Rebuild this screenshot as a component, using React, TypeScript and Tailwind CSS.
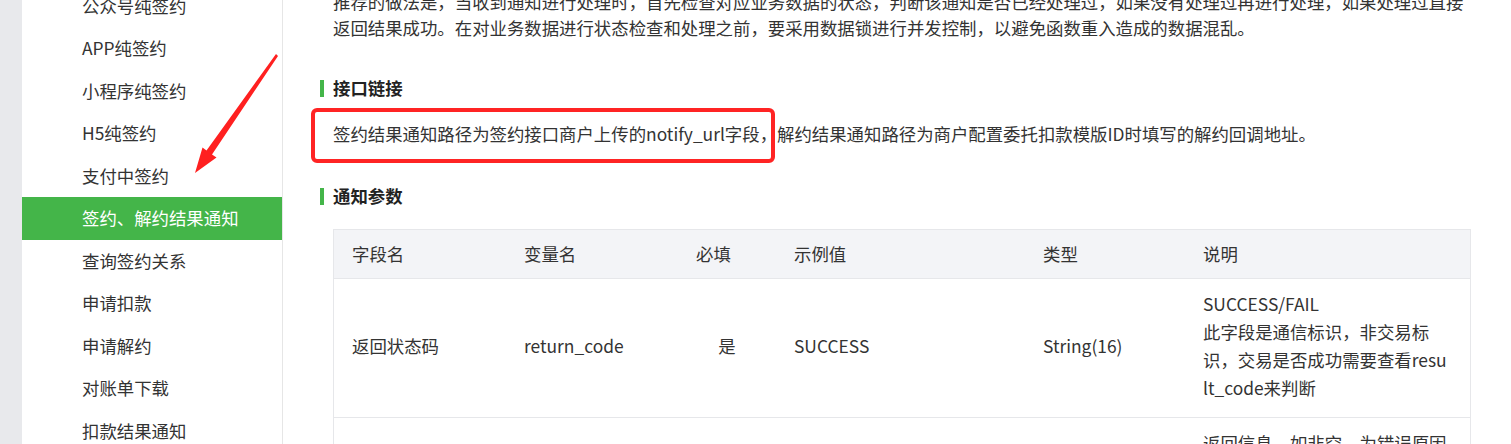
import React from "react";

const font = { fontFamily: '"Noto Sans CJK SC", "Noto Sans", sans-serif' };

const navItems = [
  "公众号纯签约",
  "APP纯签约",
  "小程序纯签约",
  "H5纯签约",
  "支付中签约",
  "签约、解约结果通知",
  "查询签约关系",
  "申请扣款",
  "申请解约",
  "对账单下载",
  "扣款结果通知",
];

function Heading({ children }: { children: React.ReactNode }) {
  return (
    <div className="flex items-center gap-[9px]">
      <span className="w-[4px] h-[17px] bg-[#44b549]" />
      <span className="font-bold text-[17.4px] leading-[26px] text-[#222]">{children}</span>
    </div>
  );
}

const gridCols = "grid grid-cols-[172px_172px_98px_250px_160px_284px]";

export default function App() {
  return (
    <div
      className="relative w-[1511px] h-[444px] overflow-hidden flex bg-white text-[#333]"
      style={font}
    >
      <div className="w-[22px] shrink-0 bg-[#e8e9ec]" />
      <aside className="w-[261px] shrink-0 border-r border-[#e6e6e6] bg-white">
        <div className="-mt-[15.5px]">
          {navItems.map((t, i) => (
            <div
              key={t}
              className={
                i === 5
                  ? "h-[42.5px] flex items-center pl-[60px] text-[17.4px] bg-[#44b549] text-white"
                  : "h-[42.5px] flex items-center pl-[60px] text-[17.4px] text-[#333]"
              }
            >
              {t}
            </div>
          ))}
        </div>
      </aside>

      <main className="flex-1 min-w-0 pl-[37px]">
        <div className="-mt-[11px] ml-[13px] text-[17.4px] leading-[26px] whitespace-nowrap">
          <div>
            推荐的做法是，当收到通知进行处理时，首先检查对应业务数据的状态，判断该通知是否已经处理过，如果没有处理过再进行处理，如果处理过直接
          </div>
          <div>
            返回结果成功。在对业务数据进行状态检查和处理之前，要采用数据锁进行并发控制，以避免函数重入造成的数据混乱。
          </div>
        </div>

        <div className="mt-[34px]">
          <Heading>接口链接</Heading>
        </div>

        <div className="mt-[20px] ml-[13px] text-[17.4px] leading-[26px] whitespace-nowrap">
          签约结果通知路径为签约接口商户上传的notify_url字段，解约结果通知路径为商户配置委托扣款模版ID时填写的解约回调地址。
        </div>

        <div className="mt-[36px]">
          <Heading>通知参数</Heading>
        </div>

        <div className="mt-[20px] ml-[13px] w-[1138px] border border-[#e6e7ea] text-[17.4px]">
          <div className={`${gridCols} h-[48px] items-center bg-[#f3f4f7]`}>
            <div className="pl-[18px]">字段名</div>
            <div className="pl-[18px]">变量名</div>
            <div className="pl-[18px]">必填</div>
            <div className="pl-[18px]">示例值</div>
            <div className="pl-[17px]">类型</div>
            <div className="pl-[17px]">说明</div>
          </div>
          <div className={`${gridCols} items-center border-t border-[#e6e7ea] leading-[28px] pt-[11px] pb-[15px]`}>
            <div className="pl-[18px]">返回状态码</div>
            <div className="pl-[18px]">return_code</div>
            <div className="text-center">是</div>
            <div className="pl-[18px]">SUCCESS</div>
            <div className="pl-[17px]">String(16)</div>
            <div className="pl-[17px] whitespace-nowrap">
              <div>SUCCESS/FAIL</div>
              <div>此字段是通信标识，非交易标</div>
              <div>识，交易是否成功需要查看resu</div>
              <div>lt_code来判断</div>
            </div>
          </div>
          <div className={`${gridCols} items-center border-t border-[#e6e7ea] leading-[28px] pt-[11px] pb-[15px]`}>
            <div className="pl-[18px]">返回信息</div>
            <div className="pl-[18px]">return_msg</div>
            <div className="text-center">否</div>
            <div className="pl-[18px]">签名失败</div>
            <div className="pl-[17px]">String(128)</div>
            <div className="pl-[17px] whitespace-nowrap">
              <div>返回信息，如非空，为错误原因</div>
              <div>签名失败</div>
              <div>参数格式校验错误</div>
            </div>
          </div>
        </div>
      </main>

      {/* red annotation box */}
      <div className="absolute left-[311px] top-[108px] w-[464px] h-[55px] border-[4px] border-[#ff2424] rounded-[6px] pointer-events-none" />

      {/* red annotation arrow */}
      <svg
        className="absolute left-0 top-0 pointer-events-none"
        width="300"
        height="200"
        viewBox="0 0 300 200"
      >
        <polygon
          points="278,56 212,154.5 216.5,157.5 195,173 202.5,147.5 206.5,150.5 276,54"
          fill="#ff2020"
        />
      </svg>
    </div>
  );
}
